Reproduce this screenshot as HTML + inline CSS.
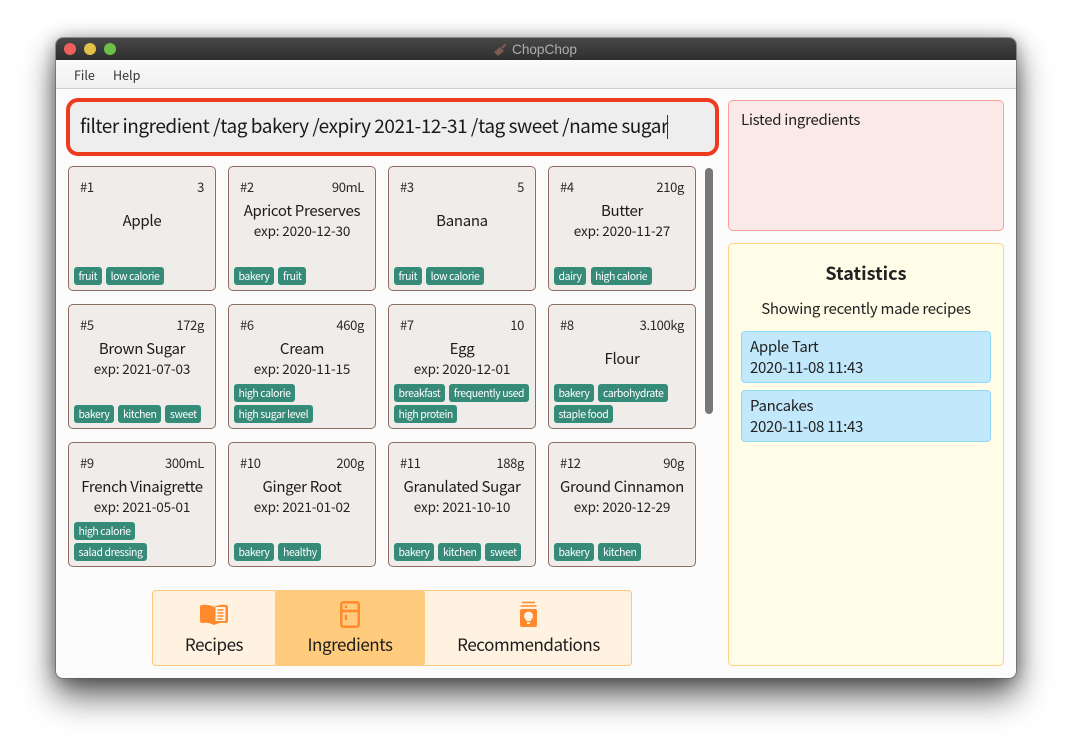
<!DOCTYPE html>
<html><head><meta charset="utf-8">
<style>
*{box-sizing:border-box}
html,body{margin:0;padding:0;width:1072px;height:752px;overflow:hidden;background:#fff}
body{font-family:"Noto Sans CJK JP","Liberation Sans",sans-serif;color:#1c1c1c;position:relative}
.a{position:absolute;white-space:nowrap}
#win{left:56px;top:38px;width:960px;height:640px;border-radius:7px;background:#fbfbfb;box-shadow:0 0 0 1px rgba(90,90,90,.55),0 18px 34px rgba(0,0,0,.62),0 2px 18px rgba(0,0,0,.38)}
.c{position:absolute;width:148px;height:125px;background:#f0ecea;border:1px solid #8d6e63;border-radius:5px}
.i,.q{position:absolute;top:10.5px;font-size:13px;letter-spacing:-.35px;line-height:18px;color:#2a2a2a}
.i{left:11px}.q{right:11px}
.n{position:absolute;left:0;right:0;text-align:center;font-size:15px;letter-spacing:-.3px;line-height:20px;top:34px;white-space:nowrap}
.n.s{top:44px}
.e{position:absolute;left:0;right:0;text-align:center;font-size:13.5px;letter-spacing:-.14px;line-height:18px;top:54px;color:#222}
.t{position:absolute;left:5px;bottom:4.6px;display:flex;flex-direction:column;gap:3px}
.r{display:flex;gap:4.5px}
.r b{font-weight:400;display:block;height:18.3px;line-height:17.5px;padding:0 3.5px;font-size:10.5px;letter-spacing:-.42px;color:#fff;background:#378a78;border:1px solid #2f8f78;border-radius:3px;white-space:nowrap}
.l{font-size:17px;letter-spacing:-.45px;line-height:24px;top:632px;transform:translateX(-50%);color:#1c1c1c}
.b{left:741px;width:250px;height:52px;background:#c1e8fb;border:1px solid #90d9fa;border-radius:4px}
.b div{position:absolute;left:8px;font-size:15px;letter-spacing:-.3px;line-height:20px;white-space:nowrap;color:#222}
</style></head><body>
<div id="win" class="a"></div>
<div class="a" style="left:56px;top:38px;width:960px;height:22px;border-radius:7px 7px 0 0;background:linear-gradient(#484848,#2e2e2e)"></div>
<div class="a" style="left:64px;top:43px;width:12px;height:12px;border-radius:50%;background:#f0605a"></div>
<div class="a" style="left:84px;top:43px;width:12px;height:12px;border-radius:50%;background:#e2c04a"></div>
<div class="a" style="left:104px;top:43px;width:12px;height:12px;border-radius:50%;background:#6cc04a"></div>
<svg class="a" style="left:493px;top:43px" width="14" height="14" viewBox="0 0 14 14"><path d="M1 9 L7 4 L11 8 L5 13 Z" fill="#7d5c52"/><path d="M9 5 L12.5 1.5" stroke="#7d5c52" stroke-width="2"/></svg>
<div class="a" style="left:512px;top:41px;font-family:'Liberation Sans',sans-serif;font-size:13.6px;line-height:17px;color:#aeaeae">ChopChop</div>
<div class="a" style="left:56px;top:60px;width:960px;height:29px;background:linear-gradient(#fafafa,#f0f0f0);border-bottom:1px solid #cdcdcd"></div>
<div class="a" style="left:74px;top:66px;font-size:12.5px;line-height:18px;color:#333">File</div>
<div class="a" style="left:113px;top:66px;font-size:12.5px;line-height:18px;color:#333">Help</div>

<div class="a" style="left:66px;top:98px;width:653px;height:58px;background:#eee;border:4px solid #ee3a1f;border-radius:12px"></div>
<div class="a" style="left:80px;top:112px;font-size:19px;letter-spacing:-.47px;line-height:28px;color:#1a1a1a">filter ingredient /tag bakery /expiry 2021-12-31 /tag sweet /name sugar</div>
<div class="a" style="left:667px;top:115px;width:1px;height:24px;background:#333"></div>

<div class="c" style="left:68px;top:166px"><div class="i">#1</div><div class="q">3</div><div class="n s">Apple</div><div class="t"><div class="r"><b>fruit</b><b>low calorie</b></div></div></div>
<div class="c" style="left:228px;top:166px"><div class="i">#2</div><div class="q">90mL</div><div class="n">Apricot Preserves</div><div class="e">exp: 2020-12-30</div><div class="t"><div class="r"><b>bakery</b><b>fruit</b></div></div></div>
<div class="c" style="left:388px;top:166px"><div class="i">#3</div><div class="q">5</div><div class="n s">Banana</div><div class="t"><div class="r"><b>fruit</b><b>low calorie</b></div></div></div>
<div class="c" style="left:548px;top:166px"><div class="i">#4</div><div class="q">210g</div><div class="n">Butter</div><div class="e">exp: 2020-11-27</div><div class="t"><div class="r"><b>dairy</b><b>high calorie</b></div></div></div>

<div class="c" style="left:68px;top:304px"><div class="i">#5</div><div class="q">172g</div><div class="n">Brown Sugar</div><div class="e">exp: 2021-07-03</div><div class="t"><div class="r"><b>bakery</b><b>kitchen</b><b>sweet</b></div></div></div>
<div class="c" style="left:228px;top:304px"><div class="i">#6</div><div class="q">460g</div><div class="n">Cream</div><div class="e">exp: 2020-11-15</div><div class="t"><div class="r"><b>high calorie</b></div><div class="r"><b>high sugar level</b></div></div></div>
<div class="c" style="left:388px;top:304px"><div class="i">#7</div><div class="q">10</div><div class="n">Egg</div><div class="e">exp: 2020-12-01</div><div class="t"><div class="r"><b>breakfast</b><b>frequently used</b></div><div class="r"><b>high protein</b></div></div></div>
<div class="c" style="left:548px;top:304px"><div class="i">#8</div><div class="q">3.100kg</div><div class="n s">Flour</div><div class="t"><div class="r"><b>bakery</b><b>carbohydrate</b></div><div class="r"><b>staple food</b></div></div></div>

<div class="c" style="left:68px;top:442px"><div class="i">#9</div><div class="q">300mL</div><div class="n">French Vinaigrette</div><div class="e">exp: 2021-05-01</div><div class="t"><div class="r"><b>high calorie</b></div><div class="r"><b>salad dressing</b></div></div></div>
<div class="c" style="left:228px;top:442px"><div class="i">#10</div><div class="q">200g</div><div class="n">Ginger Root</div><div class="e">exp: 2021-01-02</div><div class="t"><div class="r"><b>bakery</b><b>healthy</b></div></div></div>
<div class="c" style="left:388px;top:442px"><div class="i">#11</div><div class="q">188g</div><div class="n">Granulated Sugar</div><div class="e">exp: 2021-10-10</div><div class="t"><div class="r"><b>bakery</b><b>kitchen</b><b>sweet</b></div></div></div>
<div class="c" style="left:548px;top:442px"><div class="i">#12</div><div class="q">90g</div><div class="n">Ground Cinnamon</div><div class="e">exp: 2020-12-29</div><div class="t"><div class="r"><b>bakery</b><b>kitchen</b></div></div></div>

<div class="a" style="left:705px;top:168px;width:8px;height:246px;border-radius:4px;background:#777"></div>

<div class="a" style="left:152px;top:590px;width:480px;height:76px;background:#fff2e0;border:1px solid #ffc680;border-radius:4px"></div>
<div class="a" style="left:275px;top:590px;width:150px;height:76px;background:#ffcb7d;border-radius:4px"></div>
<svg class="a" style="left:200px;top:604px" width="28" height="21" viewBox="0 0 28 21"><path d="M0 3 Q0 1 2 1 Q9 0 14 3 L14 21 Q8 18 2 19 Q0 19 0 17Z" fill="#ff8a2e"/><path d="M14 3 Q20 0 26 1 Q28 1 28 3 L28 17 Q28 19 26 19 Q20 18 14 21Z" fill="#ff8a2e"/><rect x="15.500" y="3" width="10" height="14" fill="#fff2e0"/><path d="M17.500 6h6M17.500 9h6M17.500 12h6M17.500 15h5" stroke="#ff8a2e" stroke-width="1.500"/></svg>
<svg class="a" style="left:340px;top:601px" width="20" height="27" viewBox="0 0 20 27"><rect x="1.250" y="1.250" width="17.500" height="24.500" rx="2" fill="none" stroke="#ff8a2e" stroke-width="2.500"/><path d="M1 10h18" stroke="#ff8a2e" stroke-width="2.500"/><path d="M6 4.500v2.500M6 14v5" stroke="#ff8a2e" stroke-width="2.200"/></svg>
<svg class="a" style="left:519px;top:601px" width="19" height="26" viewBox="0 0 19 26"><path d="M3 1.500h13M1.500 5h16" stroke="#ff8a2e" stroke-width="1.600"/><rect x="1" y="8" width="17" height="18" rx="2" fill="#ff8a2e"/><path d="M9.500 10.500a4.500 4.500 0 0 1 4.500 4.500c0 2-1.500 3-2.500 5h-4c-1-2-2.500-3-2.500-5a4.500 4.500 0 0 1 4.500-4.500z" fill="#fff2e0"/><rect x="8" y="21" width="3" height="2" fill="#fff2e0"/></svg>
<div class="a l" style="left:214px">Recipes</div>
<div class="a l" style="left:350px">Ingredients</div>
<div class="a l" style="left:528.500px">Recommendations</div>

<div class="a" style="left:728px;top:100px;width:276px;height:131px;background:#fbe9e7;border:1px solid #ff9e95;border-radius:5px"></div>
<div class="a" style="left:741px;top:110px;font-size:15px;letter-spacing:-.3px;line-height:20px;color:#222">Listed ingredients</div>
<div class="a" style="left:728px;top:243px;width:276px;height:423px;background:#fffde8;border:1px solid #ffd180;border-radius:5px"></div>
<div class="a" style="left:728px;width:276px;text-align:center;top:261px;font-size:18px;line-height:24px;font-weight:700;color:#222">Statistics</div>
<div class="a" style="left:728px;width:276px;text-align:center;top:299px;font-size:15px;letter-spacing:-.28px;line-height:20px;color:#222">Showing recently made recipes</div>
<div class="a b" style="top:331px"><div style="top:5px">Apple Tart</div><div style="top:26px">2020-11-08 11:43</div></div>
<div class="a b" style="top:390px"><div style="top:5px">Pancakes</div><div style="top:26px">2020-11-08 11:43</div></div>
</body></html>
